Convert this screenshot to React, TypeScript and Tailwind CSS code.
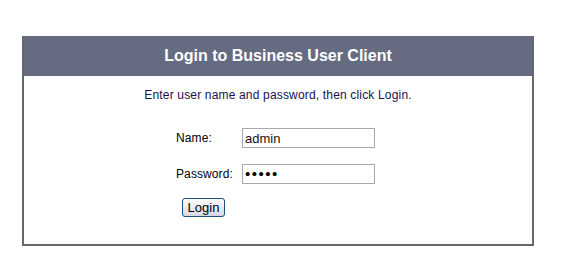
import React from "react";

export default function App() {
  return (
    <div className="w-[565px] h-[269px] bg-white pt-[36px] pl-[22px]" style={{ fontFamily: '"Liberation Sans", Arial, sans-serif' }}>
      <div className="w-[512px] h-[210px] border-x-2 border-b-2 border-[#686868] flex flex-col">
        <div className="h-[40px] bg-[#656b81] flex items-center justify-center text-white font-bold text-[16px] leading-[18px]">
          Login to Business User Client
        </div>
        <div className="pt-[12px] flex flex-col">
          <p className="text-center text-[12px] leading-[14px] tracking-[0.17px] text-[#1a1050]">
            Enter user name and password, then click Login.
          </p>
          <form
            className="mt-[26px] ml-[152px] grid grid-cols-[66px_133px] gap-y-[16px] items-center"
            onSubmit={(e) => e.preventDefault()}
          >
            <label className="text-[12px] leading-[14px] tracking-[0.1px] text-black">Name:</label>
            <input
              type="text"
              defaultValue="admin"
              className="h-[20px] w-[133px] border border-[#a6aaae] px-[2px] text-[13px] text-[#111] outline-none"
            />
            <label className="text-[12px] leading-[14px] tracking-[0.1px] text-black">Password:</label>
            <input
              type="password"
              defaultValue="admin"
              className="h-[20px] w-[133px] border border-[#a6aaae] px-[2px] text-[15px] tracking-[1.5px] text-black outline-none"
            />
            <div className="col-span-2 mt-[-2px] ml-[6px]">
              <button
                type="submit"
                className="w-[43px] h-[19px] border border-[#1e4e7a] rounded-[3px] bg-gradient-to-b from-white to-[#d6d6e6] text-[13px] leading-[15px] text-black flex items-center justify-center"
              >
                Login
              </button>
            </div>
          </form>
        </div>
      </div>
    </div>
  );
}
